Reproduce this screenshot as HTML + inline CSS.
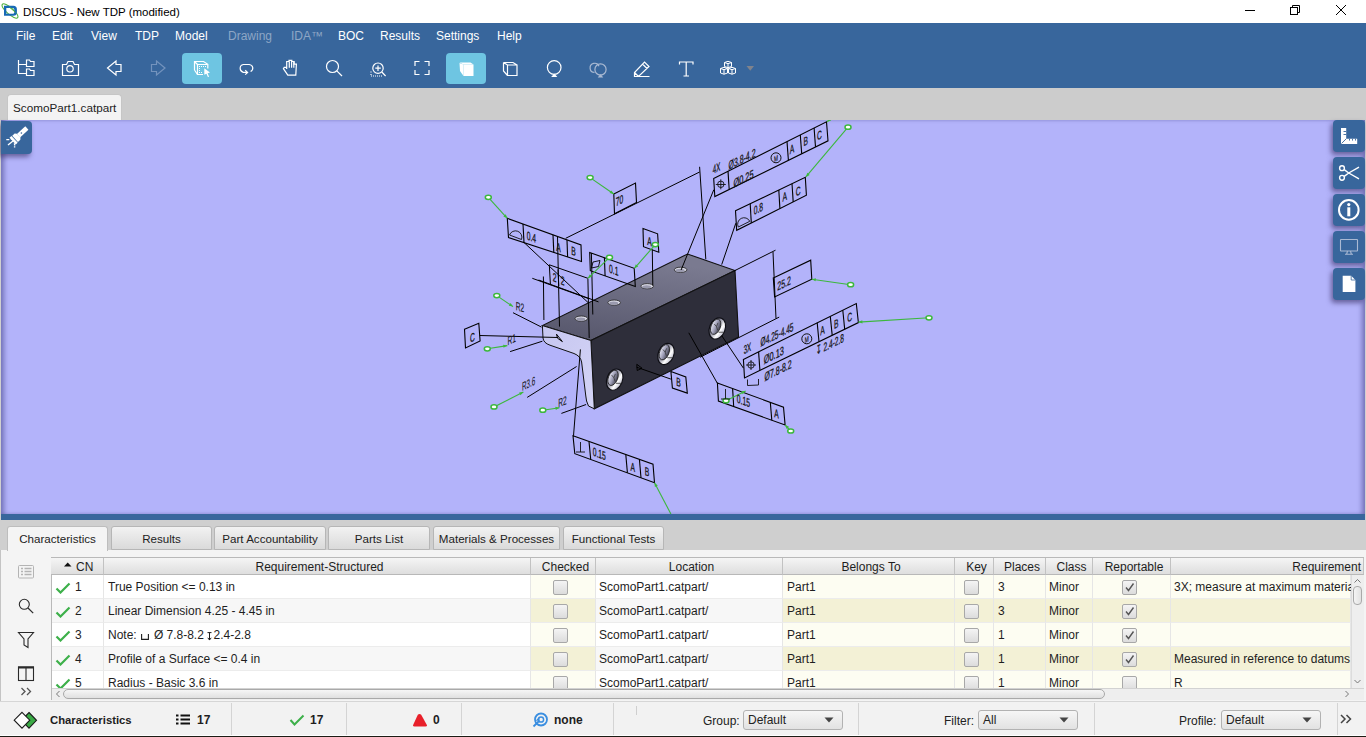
<!DOCTYPE html>
<html><head><meta charset="utf-8">
<style>
*{margin:0;padding:0;box-sizing:border-box}
html,body{width:1366px;height:737px;overflow:hidden;background:#fff;font-family:"Liberation Sans",sans-serif;color:#000}
.a{position:absolute}
#title{left:0;top:0;width:1366px;height:23px;background:#fff}
#menu{left:0;top:23px;width:1366px;height:65px;background:#38669c}
.mi{position:absolute;top:29px;font-size:12px;color:#fff;white-space:nowrap}
.dis{color:#8ea6c6}
.tb{position:absolute;top:53px;width:40px;height:31px;border-radius:4px}
.sel{background:#6ec5e2}
#tabbar{left:0;top:88px;width:1366px;height:32px;background:#cccccc}
#doctab{left:7px;top:94px;width:115px;height:26px;background:#f3f3f3;border:1px solid #c6c6c6;border-bottom:none;border-radius:4px 4px 0 0;font-size:11.7px;padding:6px 0 0 5px;color:#222;line-height:14px}
#vp{left:1px;top:120px;width:1364px;height:394px;background:#b3b3fa;box-shadow:inset 5px 0 5px -2px rgba(60,60,130,.55),inset -5px 0 5px -2px rgba(60,60,130,.55)}
#vpline{left:1px;top:514px;width:1364px;height:6px;background:#38669c}
#bottom{left:0;top:520px;width:1366px;height:182px;background:#e4e4e4}
#status{left:0;top:702px;width:1366px;height:35px;background:#f2f2f2}
.fbtn{position:absolute;width:32px;height:32px;background:#38669c;border-radius:4px;box-shadow:-2px 3px 5px rgba(40,30,80,.55)}
.tc{font-size:12px;color:#1e1e1e;line-height:24px;white-space:nowrap;padding-top:0px}
.th{font-size:12px;color:#1e1e1e;height:17px;line-height:18px;background:linear-gradient(#f5f5f5,#dedede);border-right:1px solid #c2c2c2;border-bottom:1px solid #b8b8b8;white-space:nowrap;overflow:hidden}
.cb{width:15px;height:15px;border:1px solid #a8a8a8;border-radius:2px;background:linear-gradient(#f4f4f4,#dcdcdc)}
</style></head><body>
<div id="title" class="a"></div>
<div id="menu" class="a"></div>

<!-- title bar -->
<svg class="a" style="left:0;top:0" width="22" height="23" viewBox="0 0 22 23">
 <ellipse cx="10" cy="11" rx="10.2" ry="3.3" transform="rotate(41 10 11)" fill="none" stroke="#4caf3c" stroke-width="1"/>
 <path d="M4,5.7H13.3Q16.9,5.7 16.9,9.3V12.2Q16.9,15.8 13.3,15.8H4ZM6.3,7.9V13.7H12.8Q14.3,13.7 14.3,12.2V9.4Q14.3,7.9 12.8,7.9Z" fill="#1769b5" fill-rule="evenodd"/>
 <path d="M9.5,7.2 L15.6,12.5" stroke="#4caf3c" stroke-width="1" fill="none"/>
</svg>
<div class="a" style="left:23px;top:5.5px;font-size:11.5px;color:#000;white-space:nowrap" id="ttl">DISCUS - New TDP (modified)</div>
<svg class="a" style="left:1240px;top:0" width="126" height="23" viewBox="1240 0 126 23">
 <path d="M1245 10.5h10" stroke="#000" stroke-width="1"/>
 <rect x="1290.5" y="7.5" width="7" height="7" fill="none" stroke="#000"/>
 <path d="M1292.5 7.5v-2h7v7h-2" fill="none" stroke="#000"/>
 <path d="M1336 5l10 10M1346 5l-10 10" stroke="#000" stroke-width="1"/>
</svg>
<!-- menu -->
<div class="mi" style="left:16px">File</div>
<div class="mi" style="left:52px">Edit</div>
<div class="mi" style="left:91px">View</div>
<div class="mi" style="left:135px">TDP</div>
<div class="mi" style="left:175px">Model</div>
<div class="mi dis" style="left:228px">Drawing</div>
<div class="mi dis" style="left:291px">IDA&#8482;</div>
<div class="mi" style="left:338px">BOC</div>
<div class="mi" style="left:380px">Results</div>
<div class="mi" style="left:436px">Settings</div>
<div class="mi" style="left:497px">Help</div>
<!-- toolbar -->
<div class="tb sel" style="left:182px"></div>
<div class="tb sel" style="left:446px"></div>
<svg class="a" style="left:0;top:48px" width="780" height="40" viewBox="0 48 780 40" fill="none" stroke="#fff" stroke-width="1.2">
 <!-- tree -->
 <path d="M18.5 60v13.5h7.5M18.5 64.5h7.5"/>
 <path d="M26.5 66.5v-6.5h3l1 1.5h3.5v5z"/>
 <path d="M26.5 75.5v-6.5h3l1 1.5h3.5v5z"/>
 <!-- camera -->
 <path d="M62.5 75.5v-11h4l1.5-3h5l1.5 3h4v11z"/>
 <circle cx="70" cy="68.8" r="3.2"/>
 <!-- back -->
 <path d="M107.5 68l8.5-7v3.5h5v7h-5v3.5z"/>
 <!-- forward disabled -->
 <path d="M165 68l-8.5-7v3.5h-5v7h5v3.5z" stroke="#7393bd"/>
 <!-- select cube -->
 <path d="M194.5 70V61.5h9l4.3 2.8v4.2M194.5 70l3 4.5M194.5 61.5l3 3"/>
 <path d="M207.5 64.5h-10v10h5.5"/>
 <path d="M199 66h1v1h-1zM201 66h1v1h-1zM203 66h1v1h-1zM205 66h1v1h-1zM199 68h1v1h-1zM199 70h1v1h-1zM199 72h1v1h-1zM201 72h1v1h-1z" fill="#fff" stroke="none"/>
 <path d="M204.3 68.3l5.7 4.3-2.4.6 1.5 3.5-1.2.4-1.4-3.3-2.2.9z" fill="#fff" stroke="none"/>
 <!-- lasso -->
 <path d="M250.6,71.5C253.8,69.8 253.6,65.2 249.2,64.5H243.3C239,65.4 239.2,71.2 243.3,72.4H247.2"/>
 <path d="M245.2,70.3L247.6,72.5L245.2,74.6"/>
 <!-- hand -->
 <path d="M287.8 75.2h8l.6-11h-2.3v-2.7h-2.3v-1.2h-2.8v1.2h-2.3v7.4l-.3-1.5h-2.2l-.8 1.3z"/>
 <path d="M289.3 61.5v6.2M291.6 60.8v6.9M293.8 61.5v6.2"/>
 <!-- search -->
 <circle cx="332.5" cy="66.5" r="6"/>
 <path d="M336.8 70.8l5.2 5.2"/>
 <!-- zoom in -->
 <circle cx="378" cy="68.2" r="5.2"/>
 <path d="M378 65.5v5.5M375.3 68.2h5.5M381.8 72l3.8 4"/>
 <path d="M371 71.5v1M371 74v1M371 76h11" stroke-dasharray="1 1"/>
 <!-- fit -->
 <path d="M415 66v-4.5h4.5M424.5 61.5h4.5V66M429 70v4.5h-4.5M419.5 74.5H415V70"/>
 <!-- solid cube (selected) -->
 <path d="M463.5 64.5h10v11.5h-10z" fill="#fff" stroke="none"/>
 <path d="M459.5 63l4 1.5v11.5l-3.5-5z" fill="#fff" stroke="none"/>
 <path d="M459.5 62.5h11l3 2h-10z" fill="#fff" stroke="none"/>
 <!-- wire cube -->
 <path d="M507.5 65h9.5v10.5h-9.5zM503.5 62.5h9.5l4 2.5M503.5 62.5l4 2.5M503.5 62.5v8.5l4 4.5"/>
 <!-- balloon -->
 <circle cx="554.2" cy="67.5" r="6.8"/>
 <path d="M552.5 76.5h3.5l-1.7-2z" fill="#fff"/>
 <!-- two balloons disabled -->
 <g stroke="#a9b9d2">
 <path d="M594.5 72.5a4.6 4.6 0 1 1 4.5 -6.2"/>
 <circle cx="600.5" cy="69.5" r="5.6"/>
 <path d="M599 76.8h3l-1.5-1.8z" fill="#a9b9d2"/>
 </g>
 <!-- pencil -->
 <path d="M634.5 76.5v-4l10-10.5 4.5 4.5-10.5 10h-4zM634.5 72.5l4 4M642.5 64l4.5 4.5M634.5 76.5h15"/>
 <!-- T -->
 <path d="M679.5 64.5v-2.5h13.5v2.5M686.2 62v14M683.5 76h5.5"/>
 <!-- cubes -->
 <g stroke-width="1">
 <path d="M724.5 62.5l3.5-1.2 3.5 1.2v4l-3.5 1.2-3.5-1.2z M724.5 62.5l3.5 1.2 3.5-1.2M728 63.7v4"/>
 <path d="M720.5 68.5l3.5-1.2 3.5 1.2v4.5l-3.5 1.2-3.5-1.2z M720.5 68.5l3.5 1.2 3.5-1.2M724 69.7v4.5"/>
 <path d="M728.5 68.5l3.5-1.2 3.5 1.2v4.5l-3.5 1.2-3.5-1.2z M728.5 68.5l3.5 1.2 3.5-1.2M732 69.7v4.5"/>
 </g>
 <path d="M746.5 66h7.5l-3.75 4.8z" fill="#80838c" stroke="none"/>
</svg>
<div id="tabbar" class="a"></div>
<div id="doctab" class="a">ScomoPart1.catpart</div>
<div id="vp" class="a"></div><!--DRAW--><svg class="a" style="left:0;top:120px" width="1366" height="394" viewBox="0 120 1366 394" font-family="Liberation Sans, sans-serif"><defs>
<linearGradient id="gtop" x1="0" y1="1" x2="0.3" y2="0"><stop offset="0" stop-color="#55556a"/><stop offset="1" stop-color="#7a7a90"/></linearGradient>
<radialGradient id="ghole" cx="0.35" cy="0.35" r="0.7"><stop offset="0" stop-color="#ffffff"/><stop offset="0.5" stop-color="#c8c8d8"/><stop offset="1" stop-color="#5c5c70"/></radialGradient>
<linearGradient id="gface" x1="0" y1="0" x2="1" y2="1"><stop offset="0" stop-color="#c6c6f0"/><stop offset="1" stop-color="#d4d4f6"/></linearGradient>
</defs>
<polygon points="542.4,325.6 590.9,340.5 735.0,270.6 687.5,254.0" fill="url(#gtop)" stroke="#111" stroke-width="1.1"/>
<polygon points="590.9,340.5 735.0,270.6 738.6,337.0 594.3,408.8" fill="#2e2e3a" stroke="#111" stroke-width="1.1"/>
<path d="M542.4,325.6 L590.9,340.5 L594.3,408.8 L588.5,406 Q586,401 585.8,396 L581.6,362 Q580.5,356 574,353.5 L550,345.2 Q543.5,343 543,338 Z" fill="url(#gface)" stroke="#111" stroke-width="1"/>
<ellipse cx="581.3" cy="318.6" rx="6.3" ry="2.6" fill="#d8d8e4" stroke="#222" stroke-width="0.8"/>
<ellipse cx="580.8" cy="319.20000000000005" rx="4.5" ry="1.6" fill="#9a9aae"/>
<ellipse cx="614.2" cy="302.6" rx="6.3" ry="2.6" fill="#d8d8e4" stroke="#222" stroke-width="0.8"/>
<ellipse cx="613.7" cy="303.20000000000005" rx="4.5" ry="1.6" fill="#9a9aae"/>
<ellipse cx="647.2" cy="286.2" rx="6.3" ry="2.6" fill="#d8d8e4" stroke="#222" stroke-width="0.8"/>
<ellipse cx="646.7" cy="286.8" rx="4.5" ry="1.6" fill="#9a9aae"/>
<ellipse cx="680.6" cy="269.8" rx="6.3" ry="2.6" fill="#d8d8e4" stroke="#222" stroke-width="0.8"/>
<ellipse cx="680.1" cy="270.40000000000003" rx="4.5" ry="1.6" fill="#9a9aae"/>
<defs><linearGradient id="gh1" x1="0" y1="0" x2="1" y2="0.3"><stop offset="0" stop-color="#30303c"/><stop offset="0.45" stop-color="#8a8a9c"/><stop offset="0.8" stop-color="#ffffff"/><stop offset="1" stop-color="#d0d0dc"/></linearGradient><linearGradient id="gh2" x1="0" y1="0" x2="1" y2="0"><stop offset="0" stop-color="#e8e8f4"/><stop offset="0.5" stop-color="#9c9cb4"/><stop offset="1" stop-color="#40404e"/></linearGradient></defs>
<g transform="rotate(22 614.7 379.6)">
<ellipse cx="614.7" cy="379.6" rx="7.8" ry="11" fill="url(#gh1)" stroke="#0e0e14" stroke-width="1.1"/>
<ellipse cx="612.5" cy="378.6" rx="4.6" ry="8" fill="url(#gh2)" stroke="#222" stroke-width="0.8"/>
<path d="M610.2,376.6 l3,1.5 M613.2,378.1 v-4 M613.2,378.1 l2.5,3 M617.2,382.6 l5,-2" stroke="#333" stroke-width="0.7" fill="none"/>
</g>
<g transform="rotate(22 666 354)">
<ellipse cx="666" cy="354" rx="7.8" ry="11" fill="url(#gh1)" stroke="#0e0e14" stroke-width="1.1"/>
<ellipse cx="663.8" cy="353" rx="4.6" ry="8" fill="url(#gh2)" stroke="#222" stroke-width="0.8"/>
<path d="M661.5,351 l3,1.5 M664.5,352.5 v-4 M664.5,352.5 l2.5,3 M668.5,357 l5,-2" stroke="#333" stroke-width="0.7" fill="none"/>
</g>
<g transform="rotate(22 717.3 328.5)">
<ellipse cx="717.3" cy="328.5" rx="7.8" ry="11" fill="url(#gh1)" stroke="#0e0e14" stroke-width="1.1"/>
<ellipse cx="715.0999999999999" cy="327.5" rx="4.6" ry="8" fill="url(#gh2)" stroke="#222" stroke-width="0.8"/>
<path d="M712.8,325.5 l3,1.5 M715.8,327.0 v-4 M715.8,327.0 l2.5,3 M719.8,331.5 l5,-2" stroke="#333" stroke-width="0.7" fill="none"/>
</g>
<polygon points="507.3,218.3 581.0,245.0 581.5,261.5 508.5,237.5" fill="none" stroke="#000" stroke-width="1.1"/>
<line x1="523.0" y1="224.0" x2="524.0" y2="242.6" stroke="#000" stroke-width="1.1"/>
<line x1="553.0" y1="234.9" x2="553.8" y2="252.4" stroke="#000" stroke-width="1.1"/>
<line x1="567.0" y1="239.9" x2="567.6" y2="256.9" stroke="#000" stroke-width="1.1"/>
<polygon points="613.8,194.0 635.5,183.0 636.5,202.5 614.5,213.8" fill="none" stroke="#000" stroke-width="1.1"/>
<polygon points="713.7,178.5 826.5,121.8 828.0,140.8 714.8,196.6" fill="none" stroke="#000" stroke-width="1.1"/>
<line x1="728.0" y1="171.3" x2="729.2" y2="189.5" stroke="#000" stroke-width="1.1"/>
<line x1="787.0" y1="141.6" x2="788.4" y2="160.3" stroke="#000" stroke-width="1.1"/>
<line x1="800.3" y1="135.0" x2="801.7" y2="153.7" stroke="#000" stroke-width="1.1"/>
<line x1="814.1" y1="128.0" x2="815.5" y2="146.9" stroke="#000" stroke-width="1.1"/>
<polygon points="735.5,210.8 805.3,177.3 806.4,195.2 736.7,230.3" fill="none" stroke="#000" stroke-width="1.1"/>
<line x1="750.2" y1="203.8" x2="751.3" y2="222.9" stroke="#000" stroke-width="1.1"/>
<line x1="778.8" y1="190.0" x2="779.9" y2="208.5" stroke="#000" stroke-width="1.1"/>
<line x1="792.0" y1="183.7" x2="793.2" y2="201.9" stroke="#000" stroke-width="1.1"/>
<polygon points="589.7,252.5 634.2,268.3 635.3,286.5 590.3,270.7" fill="none" stroke="#000" stroke-width="1.1"/>
<line x1="604.4" y1="257.7" x2="605.1" y2="275.9" stroke="#000" stroke-width="1.1"/>
<polygon points="643.0,228.5 657.6,233.8 658.8,252.3 643.5,246.7" fill="none" stroke="#000" stroke-width="1.1"/>
<polygon points="773.3,277.9 810.7,260.2 811.8,279.2 774.6,296.9" fill="none" stroke="#000" stroke-width="1.1"/>
<polygon points="743.4,359.4 856.3,303.5 858.4,322.6 744.5,377.9" fill="none" stroke="#000" stroke-width="1.1"/>
<line x1="758.6" y1="351.9" x2="759.9" y2="370.4" stroke="#000" stroke-width="1.1"/>
<line x1="817.2" y1="322.8" x2="819.0" y2="341.7" stroke="#000" stroke-width="1.1"/>
<line x1="830.3" y1="316.4" x2="832.2" y2="335.3" stroke="#000" stroke-width="1.1"/>
<line x1="842.8" y1="310.2" x2="844.7" y2="329.2" stroke="#000" stroke-width="1.1"/>
<polygon points="717.4,382.9 783.5,407.2 785.1,425.0 718.4,401.1" fill="none" stroke="#000" stroke-width="1.1"/>
<line x1="732.6" y1="388.5" x2="733.7" y2="406.6" stroke="#000" stroke-width="1.1"/>
<line x1="770.3" y1="402.3" x2="771.8" y2="420.2" stroke="#000" stroke-width="1.1"/>
<polygon points="573.0,435.8 653.0,464.2 654.5,482.7 574.8,453.7" fill="none" stroke="#000" stroke-width="1.1"/>
<line x1="589.0" y1="441.5" x2="590.7" y2="459.5" stroke="#000" stroke-width="1.1"/>
<line x1="625.8" y1="454.5" x2="627.4" y2="472.8" stroke="#000" stroke-width="1.1"/>
<line x1="639.4" y1="459.4" x2="641.0" y2="477.8" stroke="#000" stroke-width="1.1"/>
<polygon points="670.9,371.6 685.8,377.0 687.3,393.1 672.4,388.0" fill="none" stroke="#000" stroke-width="1.1"/>
<polygon points="464.5,329.2 478.8,323.2 480.1,341.0 465.5,348.0" fill="none" stroke="#000" stroke-width="1.1"/>
<line x1="549.3" y1="264.8" x2="587.9" y2="278.3" stroke="#000" stroke-width="1.0"/>
<line x1="549.3" y1="264.8" x2="550.4" y2="284.3" stroke="#000" stroke-width="1.0"/>
<line x1="558.0" y1="269.5" x2="558.8" y2="286.0" stroke="#000" stroke-width="1.0"/>
<line x1="565.7" y1="238.3" x2="699.6" y2="172.0" stroke="#000" stroke-width="1.0"/>
<line x1="699.6" y1="166.8" x2="705.8" y2="259.3" stroke="#000" stroke-width="1.0"/>
<line x1="713.8" y1="189.7" x2="681.1" y2="270.0" stroke="#000" stroke-width="1.0"/>
<line x1="735.8" y1="223.2" x2="721.7" y2="264.6" stroke="#000" stroke-width="1.0"/>
<line x1="734.0" y1="271.0" x2="775.5" y2="250.2" stroke="#000" stroke-width="1.0"/>
<line x1="773.0" y1="252.0" x2="776.0" y2="318.5" stroke="#000" stroke-width="1.0"/>
<line x1="700.0" y1="357.3" x2="779.2" y2="317.1" stroke="#000" stroke-width="1.0"/>
<line x1="721.7" y1="335.6" x2="743.4" y2="368.1" stroke="#000" stroke-width="1.0"/>
<line x1="688.8" y1="332.8" x2="717.4" y2="383.3" stroke="#000" stroke-width="1.0"/>
<line x1="636.6" y1="367.2" x2="670.9" y2="379.1" stroke="#000" stroke-width="1.0"/>
<line x1="523.5" y1="242.0" x2="589.1" y2="303.5" stroke="#000" stroke-width="1.0"/>
<line x1="532.3" y1="278.3" x2="589.1" y2="298.8" stroke="#000" stroke-width="1.0"/>
<line x1="543.4" y1="276.5" x2="543.9" y2="320.0" stroke="#000" stroke-width="1.0"/>
<line x1="557.5" y1="236.7" x2="559.5" y2="326.6" stroke="#000" stroke-width="1.0"/>
<line x1="587.9" y1="278.9" x2="589.2" y2="338.0" stroke="#000" stroke-width="1.0"/>
<line x1="591.4" y1="253.0" x2="592.8" y2="314.5" stroke="#000" stroke-width="1.0"/>
<line x1="652.3" y1="249.6" x2="652.8" y2="285.5" stroke="#000" stroke-width="1.0"/>
<line x1="479.7" y1="335.5" x2="558.0" y2="337.5" stroke="#000" stroke-width="1.0"/>
<line x1="513.0" y1="312.7" x2="541.5" y2="327.1" stroke="#000" stroke-width="1.0"/>
<line x1="510.1" y1="351.6" x2="542.4" y2="341.2" stroke="#000" stroke-width="1.0"/>
<line x1="527.2" y1="397.4" x2="576.6" y2="366.5" stroke="#000" stroke-width="1.0"/>
<line x1="561.4" y1="413.4" x2="586.1" y2="404.5" stroke="#000" stroke-width="1.0"/>
<line x1="580.4" y1="349.4" x2="573.5" y2="435.8" stroke="#000" stroke-width="1.0"/>
<line x1="538.6" y1="280.0" x2="598.5" y2="301.9" stroke="#000" stroke-width="1.0"/>
<polygon points="556.5,334.2 562.4,341.6 557.5,338.2" fill="none" stroke="#000" stroke-width="1"/>
<polygon points="636.8,364.3 637.2,370.5 642.0,368.2" fill="none" stroke="#000" stroke-width="1"/>
<line x1="488.3" y1="197.3" x2="507.3" y2="218.3" stroke="#3cb83c" stroke-width="1.1"/>
<polygon points="507.3,218.3 503.4,216.4 505.8,214.3" fill="#3cb83c"/>
<ellipse cx="488.3" cy="197.3" rx="3" ry="2.1" fill="#ffffff" stroke="#3cb83c" stroke-width="1.5"/>
<line x1="590.1" y1="177.6" x2="613.8" y2="194.0" stroke="#3cb83c" stroke-width="1.1"/>
<polygon points="613.8,194.0 609.6,193.0 611.4,190.4" fill="#3cb83c"/>
<ellipse cx="590.1" cy="177.6" rx="3" ry="2.1" fill="#ffffff" stroke="#3cb83c" stroke-width="1.5"/>
<line x1="848.0" y1="127.2" x2="805.9" y2="176.9" stroke="#3cb83c" stroke-width="1.1"/>
<polygon points="805.9,176.9 807.3,172.8 809.7,174.9" fill="#3cb83c"/>
<ellipse cx="848.0" cy="127.2" rx="3" ry="2.1" fill="#ffffff" stroke="#3cb83c" stroke-width="1.5"/>
<line x1="830.0" y1="119.5" x2="827.0" y2="121.7" stroke="#3cb83c" stroke-width="1.1"/>
<polygon points="827.0,121.7 829.3,118.0 831.2,120.6" fill="#3cb83c"/>
<line x1="609.5" y1="257.4" x2="587.9" y2="278.3" stroke="#3cb83c" stroke-width="1.1"/>
<polygon points="587.9,278.3 589.7,274.4 591.9,276.7" fill="#3cb83c"/>
<ellipse cx="609.5" cy="257.4" rx="3" ry="2.1" fill="#ffffff" stroke="#3cb83c" stroke-width="1.5"/>
<line x1="655.3" y1="244.6" x2="634.4" y2="268.3" stroke="#3cb83c" stroke-width="1.1"/>
<polygon points="634.4,268.3 635.8,264.2 638.2,266.4" fill="#3cb83c"/>
<ellipse cx="655.3" cy="244.6" rx="3" ry="2.1" fill="#ffffff" stroke="#3cb83c" stroke-width="1.5"/>
<line x1="850.6" y1="284.7" x2="811.8" y2="279.2" stroke="#3cb83c" stroke-width="1.1"/>
<polygon points="811.8,279.2 816.0,278.2 815.5,281.3" fill="#3cb83c"/>
<ellipse cx="850.6" cy="284.7" rx="3" ry="2.1" fill="#ffffff" stroke="#3cb83c" stroke-width="1.5"/>
<line x1="929.0" y1="317.8" x2="858.4" y2="322.1" stroke="#3cb83c" stroke-width="1.1"/>
<polygon points="858.4,322.1 862.3,320.3 862.5,323.5" fill="#3cb83c"/>
<ellipse cx="929.0" cy="317.8" rx="3" ry="2.1" fill="#ffffff" stroke="#3cb83c" stroke-width="1.5"/>
<line x1="726.0" y1="400.7" x2="745.6" y2="391.0" stroke="#3cb83c" stroke-width="1.1"/>
<polygon points="745.6,391.0 742.7,394.2 741.3,391.3" fill="#3cb83c"/>
<ellipse cx="726.0" cy="400.7" rx="3" ry="2.1" fill="#ffffff" stroke="#3cb83c" stroke-width="1.5"/>
<line x1="790.7" y1="431.0" x2="785.1" y2="425.0" stroke="#3cb83c" stroke-width="1.1"/>
<polygon points="785.1,425.0 789.0,426.8 786.7,429.0" fill="#3cb83c"/>
<ellipse cx="790.7" cy="431.0" rx="3" ry="2.1" fill="#ffffff" stroke="#3cb83c" stroke-width="1.5"/>
<line x1="670.9" y1="514.0" x2="654.5" y2="482.7" stroke="#3cb83c" stroke-width="1.1"/>
<polygon points="654.5,482.7 657.8,485.5 654.9,487.0" fill="#3cb83c"/>
<line x1="496.8" y1="295.6" x2="513.0" y2="306.6" stroke="#3cb83c" stroke-width="1.1"/>
<polygon points="513.0,306.6 508.8,305.7 510.6,303.0" fill="#3cb83c"/>
<ellipse cx="496.8" cy="295.6" rx="3" ry="2.1" fill="#ffffff" stroke="#3cb83c" stroke-width="1.5"/>
<line x1="487.3" y1="348.8" x2="507.3" y2="345.6" stroke="#3cb83c" stroke-width="1.1"/>
<polygon points="507.3,345.6 503.6,347.8 503.1,344.7" fill="#3cb83c"/>
<ellipse cx="487.3" cy="348.8" rx="3" ry="2.1" fill="#ffffff" stroke="#3cb83c" stroke-width="1.5"/>
<line x1="494.0" y1="406.9" x2="523.4" y2="392.1" stroke="#3cb83c" stroke-width="1.1"/>
<polygon points="523.4,392.1 520.5,395.3 519.1,392.5" fill="#3cb83c"/>
<ellipse cx="494.0" cy="406.9" rx="3" ry="2.1" fill="#ffffff" stroke="#3cb83c" stroke-width="1.5"/>
<line x1="542.8" y1="410.2" x2="559.5" y2="407.7" stroke="#3cb83c" stroke-width="1.1"/>
<polygon points="559.5,407.7 555.8,409.9 555.3,406.7" fill="#3cb83c"/>
<ellipse cx="542.8" cy="410.2" rx="3" ry="2.1" fill="#ffffff" stroke="#3cb83c" stroke-width="1.5"/>
<text transform="matrix(0.56,0.202,0,1,531.4,241.2)" text-anchor="middle" font-size="12" fill="#141414" stroke="#141414" stroke-width="0.3">0.4</text>
<text transform="matrix(0.56,0.202,0,1,558.5,251.6)" text-anchor="middle" font-size="12" fill="#141414" stroke="#141414" stroke-width="0.3">A</text>
<text transform="matrix(0.56,0.202,0,1,573.4,255.2)" text-anchor="middle" font-size="12" fill="#141414" stroke="#141414" stroke-width="0.3">B</text>
<path d="M509.5,235 A6.4,6.4 0 0 1 521.5,239.5 Z" fill="none" stroke="#111" stroke-width="0.9"/>
<text transform="matrix(0.56,-0.280,0,1,619.5,204.6)" text-anchor="middle" font-size="12" fill="#141414" stroke="#141414" stroke-width="0.3">70</text>
<text transform="matrix(0.5,-0.245,0,1,716.5,172.2)" text-anchor="middle" font-size="12" fill="#141414" stroke="#141414" stroke-width="0.3">4X</text>
<text transform="matrix(0.58,-0.284,0,1,742.0,163.2)" text-anchor="middle" font-size="12" fill="#141414" stroke="#141414" stroke-width="0.3">Ø3.8-4.2</text>
<text transform="matrix(0.62,-0.304,0,1,743.5,182.7)" text-anchor="middle" font-size="12" fill="#141414" stroke="#141414" stroke-width="0.3">Ø0.25</text>
<text transform="matrix(0.56,-0.274,0,1,792.0,153.2)" text-anchor="middle" font-size="12" fill="#141414" stroke="#141414" stroke-width="0.3">A</text>
<text transform="matrix(0.56,-0.274,0,1,805.8,145.2)" text-anchor="middle" font-size="12" fill="#141414" stroke="#141414" stroke-width="0.3">B</text>
<text transform="matrix(0.56,-0.274,0,1,819.5,139.2)" text-anchor="middle" font-size="12" fill="#141414" stroke="#141414" stroke-width="0.3">C</text>
<circle cx="776" cy="157.8" r="5" fill="none" stroke="#111" stroke-width="1"/>
<text transform="matrix(0.6,-0.294,0,1,776.0,161.2)" text-anchor="middle" font-size="8" fill="#141414" stroke="#141414" stroke-width="0.2">M</text>
<g stroke="#111" stroke-width="0.9" fill="none"><circle cx="720.8" cy="184.3" r="3.2"/><path d="M715.8,184.5h10M720.8,179.3v10"/></g>
<text transform="matrix(0.56,-0.274,0,1,758.4,212.8)" text-anchor="middle" font-size="12" fill="#141414" stroke="#141414" stroke-width="0.3">0.8</text>
<text transform="matrix(0.56,-0.274,0,1,784.7,200.6)" text-anchor="middle" font-size="12" fill="#141414" stroke="#141414" stroke-width="0.3">A</text>
<text transform="matrix(0.56,-0.274,0,1,798.3,195.2)" text-anchor="middle" font-size="12" fill="#141414" stroke="#141414" stroke-width="0.3">C</text>
<path d="M738.3,227 A6.3,6.3 0 0 1 749.8,221.3 Z" fill="none" stroke="#111" stroke-width="0.9"/>
<text transform="matrix(0.56,0.202,0,1,613.7,274.2)" text-anchor="middle" font-size="12" fill="#141414" stroke="#141414" stroke-width="0.3">0.1</text>
<polygon points="593.0,262.0 600.0,260.5 598.5,266.5 591.5,268.0" fill="none" stroke="#000" stroke-width="0.9"/>
<text transform="matrix(0.56,0.202,0,1,649.4,245.6)" text-anchor="middle" font-size="12" fill="#141414" stroke="#141414" stroke-width="0.3">A</text>
<text transform="matrix(0.56,0.202,0,1,554.5,281.7)" text-anchor="middle" font-size="12" fill="#141414" stroke="#141414" stroke-width="0.3">2</text>
<text transform="matrix(0.56,0.202,0,1,562.7,284.8)" text-anchor="middle" font-size="12" fill="#141414" stroke="#141414" stroke-width="0.3">2</text>
<text transform="matrix(0.58,-0.284,0,1,784.1,287.5)" text-anchor="middle" font-size="12" fill="#141414" stroke="#141414" stroke-width="0.3">25.2</text>
<text transform="matrix(0.5,-0.245,0,1,747.3,352.4)" text-anchor="middle" font-size="12" fill="#141414" stroke="#141414" stroke-width="0.3">3X</text>
<text transform="matrix(0.55,-0.270,0,1,777.0,338.7)" text-anchor="middle" font-size="12" fill="#141414" stroke="#141414" stroke-width="0.3">Ø4.25-4.45</text>
<text transform="matrix(0.62,-0.304,0,1,773.8,359.3)" text-anchor="middle" font-size="12" fill="#141414" stroke="#141414" stroke-width="0.3">Ø0.13</text>
<text transform="matrix(0.56,-0.274,0,1,822.6,334.3)" text-anchor="middle" font-size="12" fill="#141414" stroke="#141414" stroke-width="0.3">A</text>
<text transform="matrix(0.56,-0.274,0,1,836.3,327.8)" text-anchor="middle" font-size="12" fill="#141414" stroke="#141414" stroke-width="0.3">B</text>
<text transform="matrix(0.56,-0.274,0,1,849.7,321.3)" text-anchor="middle" font-size="12" fill="#141414" stroke="#141414" stroke-width="0.3">C</text>
<circle cx="806.8" cy="338.8" r="5" fill="none" stroke="#111" stroke-width="1"/>
<text transform="matrix(0.6,-0.294,0,1,806.8,342.2)" text-anchor="middle" font-size="8" fill="#141414" stroke="#141414" stroke-width="0.2">M</text>
<g stroke="#111" stroke-width="0.9" fill="none"><circle cx="751" cy="365" r="3.2"/><path d="M746,365h10M751,360v10"/></g>
<text transform="matrix(0.58,-0.284,0,1,778.1,374.5)" text-anchor="middle" font-size="12" fill="#141414" stroke="#141414" stroke-width="0.3">Ø7.8-8.2</text>
<path d="M747.5,379.5 v6 l11,-0.5 v-6" fill="none" stroke="#111" stroke-width="0.9"/>
<text transform="matrix(0.55,-0.270,0,1,830.2,348.5)" text-anchor="middle" font-size="12" fill="#141414" stroke="#141414" stroke-width="0.3">↧ 2.4-2.8</text>
<text transform="matrix(0.56,0.202,0,1,743.4,404.9)" text-anchor="middle" font-size="12" fill="#141414" stroke="#141414" stroke-width="0.3">0.15</text>
<text transform="matrix(0.56,0.202,0,1,776.4,417.9)" text-anchor="middle" font-size="12" fill="#141414" stroke="#141414" stroke-width="0.3">A</text>
<path d="M721,399h9M725.5,399v-10" stroke="#111" stroke-width="0.9"/>
<text transform="matrix(0.56,0.202,0,1,599.3,457.9)" text-anchor="middle" font-size="12" fill="#141414" stroke="#141414" stroke-width="0.3">0.15</text>
<text transform="matrix(0.56,0.202,0,1,632.7,471.4)" text-anchor="middle" font-size="12" fill="#141414" stroke="#141414" stroke-width="0.3">A</text>
<text transform="matrix(0.56,0.202,0,1,647.0,475.8)" text-anchor="middle" font-size="12" fill="#141414" stroke="#141414" stroke-width="0.3">B</text>
<path d="M576,452h9M580.5,452v-10" stroke="#111" stroke-width="0.9"/>
<text transform="matrix(0.56,0.202,0,1,678.4,386.3)" text-anchor="middle" font-size="12" fill="#141414" stroke="#141414" stroke-width="0.3">B</text>
<text transform="matrix(0.56,-0.274,0,1,472.4,341.5)" text-anchor="middle" font-size="12" fill="#141414" stroke="#141414" stroke-width="0.3">C</text>
<text transform="matrix(0.55,0.165,0,1,520.0,311.2)" text-anchor="middle" font-size="12" fill="#141414" stroke="#141414" stroke-width="0.1">R2</text>
<text transform="matrix(0.55,-0.248,0,1,511.6,343.5)" text-anchor="middle" font-size="12" fill="#141414" stroke="#141414" stroke-width="0.1">R1</text>
<text transform="matrix(0.52,-0.260,0,1,528.7,387.8)" text-anchor="middle" font-size="12" fill="#141414" stroke="#141414" stroke-width="0.1">R3.6</text>
<text transform="matrix(0.55,-0.220,0,1,562.4,405.8)" text-anchor="middle" font-size="12" fill="#141414" stroke="#141414" stroke-width="0.1">R2</text></svg><!--/DRAW-->

<div class="a" style="left:0;top:120px;width:1px;height:582px;background:#d0d0d0"></div>
<div class="a" style="left:1365px;top:120px;width:1px;height:582px;background:#d0d0d0"></div>
<div class="fbtn" style="left:1px;top:121px;width:31px;height:33px;border-radius:0 4px 4px 0"></div>
<div class="fbtn" style="left:1333px;top:120px"></div>
<div class="fbtn" style="left:1333px;top:157px"></div>
<div class="fbtn" style="left:1333px;top:194px"></div>
<div class="fbtn" style="left:1333px;top:231px"></div>
<div class="fbtn" style="left:1333px;top:268px"></div>
<svg class="a" style="left:0;top:120px" width="40" height="40" viewBox="0 120 40 40">
 <g transform="translate(15.3 138.6) rotate(-42.6)" fill="#fff">
  <path d="M-3.6,-4.6h2.6v9.2h-2.6z"/>
  <path d="M-0.3,-4.2h3.3l1.5,1.6v5.2l-1.5,1.6h-3.3z"/>
  <path d="M4.3,-2.3h11.4v4.6h-11.4z"/>
  <circle cx="8.3" cy="0" r="0.8" fill="#38669c"/>
 </g>
 <path d="M6.3 139.6h3M8 145l5-4M14.5 143.2l.2 2.3M14.6 146.3v1.1M11.3 138.9l.4.6" stroke="#fff" stroke-width="1.4" fill="none"/>
</svg>
<svg class="a" style="left:1333px;top:120px" width="33" height="185" viewBox="1333 120 33 185">
 <!-- ruler -->
 <path d="M1341 128h5.2v10.8h11v5.2H1341z" fill="#fff"/>
 <path d="M1343.5 131.5h2.7M1343.5 134.5h2.7M1349.5 138.8v1.8M1352.5 138.8v1.8M1355.5 138.8v1.8M1341.5 143.5l4.7-4.7" stroke="#38669c" stroke-width="0.9" fill="none"/>
 <!-- scissors -->
 <g fill="none" stroke="#fff" stroke-width="1.4">
  <circle cx="1342" cy="168.2" r="2.4"/>
  <circle cx="1342" cy="177.8" r="2.4"/>
  <path d="M1344.2 169.6l4.5 3.4 10.3-5.8M1344.2 176.4l4.5-3.4 10.3 5.8"/>
 </g>
 <!-- info -->
 <circle cx="1348.8" cy="209.9" r="9.8" fill="none" stroke="#fff" stroke-width="2"/>
 <circle cx="1348.8" cy="204.6" r="1.6" fill="#fff"/>
 <rect x="1347.3" y="207.3" width="3" height="9" fill="#fff"/>
 <!-- monitor -->
 <g fill="none" stroke="#a9b9d3" stroke-width="1.1">
  <rect x="1340.5" y="239.5" width="17" height="11.5" rx="0.5"/>
  <path d="M1347.5 251l-.8 3M1350.5 251l.8 3M1345 254.3h8"/>
 </g>
 <!-- page -->
 <path d="M1342.7 275.8h8.5l4.2 4.2v12.1h-12.7z" fill="#fff"/>
 <path d="M1351.2 275.8v4.2h4.2" fill="none" stroke="#38669c" stroke-width="0.8"/>
</svg>
<div id="vpline" class="a"></div>
<!--BOT--><div class="a" style="left:0;top:520px;width:1366px;height:31px;background:#cfcfcf"></div>
<div class="a" style="left:0;top:550px;width:1366px;height:152px;background:#f4f4f4;border-left:1px solid #c4c4c4"></div>
<div class="a" style="left:7px;top:526px;width:101px;height:25px;background:#f4f4f4;border:1px solid #bdbdbd;border-bottom:none;border-radius:3px 3px 0 0;font-size:11.6px;color:#222;text-align:center;line-height:23px">Characteristics</div>
<div class="a" style="left:111px;top:526px;width:101px;height:24px;background:linear-gradient(#f2f2f2,#dadada);border:1px solid #b6b6b6;border-radius:3px 3px 0 0;font-size:11.6px;color:#222;text-align:center;line-height:23px">Results</div>
<div class="a" style="left:214px;top:526px;width:112px;height:24px;background:linear-gradient(#f2f2f2,#dadada);border:1px solid #b6b6b6;border-radius:3px 3px 0 0;font-size:11.6px;color:#222;text-align:center;line-height:23px">Part Accountability</div>
<div class="a" style="left:328px;top:526px;width:102px;height:24px;background:linear-gradient(#f2f2f2,#dadada);border:1px solid #b6b6b6;border-radius:3px 3px 0 0;font-size:11.6px;color:#222;text-align:center;line-height:23px">Parts List</div>
<div class="a" style="left:433px;top:526px;width:127px;height:24px;background:linear-gradient(#f2f2f2,#dadada);border:1px solid #b6b6b6;border-radius:3px 3px 0 0;font-size:11.6px;color:#222;text-align:center;line-height:23px">Materials &amp; Processes</div>
<div class="a" style="left:563px;top:526px;width:101px;height:24px;background:linear-gradient(#f2f2f2,#dadada);border:1px solid #b6b6b6;border-radius:3px 3px 0 0;font-size:11.6px;color:#222;text-align:center;line-height:23px">Functional Tests</div>
<div class="a" style="left:51px;top:557px;width:1313px;height:143px;background:#fff;border:1px solid #b9b9b9"></div>
<div class="a" style="left:52px;top:575px;width:1299px;height:113px;overflow:hidden">
<div class="a" style="left:-1px;top:0px;width:53px;height:24px;background:#ffffff;border-right:1px solid #e6e6e6;border-bottom:1px solid #ececec"></div>
<div class="a" style="left:52px;top:0px;width:427px;height:24px;background:#ffffff;border-right:1px solid #e6e6e6;border-bottom:1px solid #ececec"></div>
<div class="a" style="left:479px;top:0px;width:65px;height:24px;background:#fdfdf2;border-right:1px solid #e6e6e6;border-bottom:1px solid #ececec"></div>
<div class="a" style="left:544px;top:0px;width:187px;height:24px;background:#ffffff;border-right:1px solid #e6e6e6;border-bottom:1px solid #ececec"></div>
<div class="a" style="left:731px;top:0px;width:172px;height:24px;background:#fdfdf2;border-right:1px solid #e6e6e6;border-bottom:1px solid #ececec"></div>
<div class="a" style="left:903px;top:0px;width:39px;height:24px;background:#fdfdf2;border-right:1px solid #e6e6e6;border-bottom:1px solid #ececec"></div>
<div class="a" style="left:942px;top:0px;width:52px;height:24px;background:#fdfdf2;border-right:1px solid #e6e6e6;border-bottom:1px solid #ececec"></div>
<div class="a" style="left:994px;top:0px;width:47px;height:24px;background:#fdfdf2;border-right:1px solid #e6e6e6;border-bottom:1px solid #ececec"></div>
<div class="a" style="left:1041px;top:0px;width:78px;height:24px;background:#fdfdf2;border-right:1px solid #e6e6e6;border-bottom:1px solid #ececec"></div>
<div class="a" style="left:1119px;top:0px;width:180px;height:24px;background:#fdfdf2;border-right:1px solid #e6e6e6;border-bottom:1px solid #ececec"></div>
<svg class="a" style="left:3px;top:7px" width="16" height="12" viewBox="0 0 16 12"><path d="M1.5 6.5l4 4L14.5 1.5" fill="none" stroke="#3db04a" stroke-width="2.2"/></svg>
<div class="a tc" style="left:23px;top:0px;">1</div>
<div class="a tc" style="left:56px;top:0px;">True Position &lt;= 0.13 in</div>
<div class="a tc" style="left:547px;top:0px;">ScomoPart1.catpart/</div>
<div class="a tc" style="left:735px;top:0px;">Part1</div>
<div class="a tc" style="left:946px;top:0px;">3</div>
<div class="a tc" style="left:997px;top:0px;">Minor</div>
<div class="a tc" style="left:1122px;top:0px;">3X; measure at maximum materia</div>
<div class="a cb" style="left:501px;top:5px"></div>
<div class="a cb" style="left:912px;top:5px"></div>
<div class="a cb" style="left:1070px;top:5px"><svg width="13" height="13" viewBox="0 0 13 13" style="position:absolute;left:0;top:0"><path d="M3 6.5l2.5 3 5-7" fill="none" stroke="#555" stroke-width="1.4"/></svg></div>
<div class="a" style="left:-1px;top:24px;width:53px;height:24px;background:#f7f7f7;border-right:1px solid #e6e6e6;border-bottom:1px solid #ececec"></div>
<div class="a" style="left:52px;top:24px;width:427px;height:24px;background:#f7f7f7;border-right:1px solid #e6e6e6;border-bottom:1px solid #ececec"></div>
<div class="a" style="left:479px;top:24px;width:65px;height:24px;background:#f3f1d6;border-right:1px solid #e6e6e6;border-bottom:1px solid #ececec"></div>
<div class="a" style="left:544px;top:24px;width:187px;height:24px;background:#f7f7f7;border-right:1px solid #e6e6e6;border-bottom:1px solid #ececec"></div>
<div class="a" style="left:731px;top:24px;width:172px;height:24px;background:#f3f1d6;border-right:1px solid #e6e6e6;border-bottom:1px solid #ececec"></div>
<div class="a" style="left:903px;top:24px;width:39px;height:24px;background:#f3f1d6;border-right:1px solid #e6e6e6;border-bottom:1px solid #ececec"></div>
<div class="a" style="left:942px;top:24px;width:52px;height:24px;background:#f3f1d6;border-right:1px solid #e6e6e6;border-bottom:1px solid #ececec"></div>
<div class="a" style="left:994px;top:24px;width:47px;height:24px;background:#f3f1d6;border-right:1px solid #e6e6e6;border-bottom:1px solid #ececec"></div>
<div class="a" style="left:1041px;top:24px;width:78px;height:24px;background:#f3f1d6;border-right:1px solid #e6e6e6;border-bottom:1px solid #ececec"></div>
<div class="a" style="left:1119px;top:24px;width:180px;height:24px;background:#f3f1d6;border-right:1px solid #e6e6e6;border-bottom:1px solid #ececec"></div>
<svg class="a" style="left:3px;top:31px" width="16" height="12" viewBox="0 0 16 12"><path d="M1.5 6.5l4 4L14.5 1.5" fill="none" stroke="#3db04a" stroke-width="2.2"/></svg>
<div class="a tc" style="left:23px;top:24px;">2</div>
<div class="a tc" style="left:56px;top:24px;">Linear Dimension 4.25 - 4.45 in</div>
<div class="a tc" style="left:547px;top:24px;">ScomoPart1.catpart/</div>
<div class="a tc" style="left:735px;top:24px;">Part1</div>
<div class="a tc" style="left:946px;top:24px;">3</div>
<div class="a tc" style="left:997px;top:24px;">Minor</div>
<div class="a cb" style="left:501px;top:29px"></div>
<div class="a cb" style="left:912px;top:29px"></div>
<div class="a cb" style="left:1070px;top:29px"><svg width="13" height="13" viewBox="0 0 13 13" style="position:absolute;left:0;top:0"><path d="M3 6.5l2.5 3 5-7" fill="none" stroke="#555" stroke-width="1.4"/></svg></div>
<div class="a" style="left:-1px;top:48px;width:53px;height:24px;background:#ffffff;border-right:1px solid #e6e6e6;border-bottom:1px solid #ececec"></div>
<div class="a" style="left:52px;top:48px;width:427px;height:24px;background:#ffffff;border-right:1px solid #e6e6e6;border-bottom:1px solid #ececec"></div>
<div class="a" style="left:479px;top:48px;width:65px;height:24px;background:#fdfdf2;border-right:1px solid #e6e6e6;border-bottom:1px solid #ececec"></div>
<div class="a" style="left:544px;top:48px;width:187px;height:24px;background:#ffffff;border-right:1px solid #e6e6e6;border-bottom:1px solid #ececec"></div>
<div class="a" style="left:731px;top:48px;width:172px;height:24px;background:#fdfdf2;border-right:1px solid #e6e6e6;border-bottom:1px solid #ececec"></div>
<div class="a" style="left:903px;top:48px;width:39px;height:24px;background:#fdfdf2;border-right:1px solid #e6e6e6;border-bottom:1px solid #ececec"></div>
<div class="a" style="left:942px;top:48px;width:52px;height:24px;background:#fdfdf2;border-right:1px solid #e6e6e6;border-bottom:1px solid #ececec"></div>
<div class="a" style="left:994px;top:48px;width:47px;height:24px;background:#fdfdf2;border-right:1px solid #e6e6e6;border-bottom:1px solid #ececec"></div>
<div class="a" style="left:1041px;top:48px;width:78px;height:24px;background:#fdfdf2;border-right:1px solid #e6e6e6;border-bottom:1px solid #ececec"></div>
<div class="a" style="left:1119px;top:48px;width:180px;height:24px;background:#fdfdf2;border-right:1px solid #e6e6e6;border-bottom:1px solid #ececec"></div>
<svg class="a" style="left:3px;top:55px" width="16" height="12" viewBox="0 0 16 12"><path d="M1.5 6.5l4 4L14.5 1.5" fill="none" stroke="#3db04a" stroke-width="2.2"/></svg>
<div class="a tc" style="left:23px;top:48px;">3</div>
<div class="a tc" style="left:56px;top:48px;">Note:<svg style="position:absolute;left:33px;top:11px" width="8" height="6" viewBox="0 0 8 6"><path d="M0.6 0v5.4h6.8V0" fill="none" stroke="#1e1e1e" stroke-width="1.1"/></svg><span style="position:absolute;left:46px">&#216;</span><span style="position:absolute;left:58.5px">7.8-8.2</span><svg style="position:absolute;left:98.5px;top:9px" width="5" height="9" viewBox="0 0 5 9"><path d="M0.5 0.6h4M2.5 0.6v7.5M0.8 5.8l1.7 2.2 1.7-2.2" fill="none" stroke="#1e1e1e" stroke-width="1"/></svg><span style="position:absolute;left:105.5px">2.4-2.8</span></div>
<div class="a tc" style="left:547px;top:48px;">ScomoPart1.catpart/</div>
<div class="a tc" style="left:735px;top:48px;">Part1</div>
<div class="a tc" style="left:946px;top:48px;">1</div>
<div class="a tc" style="left:997px;top:48px;">Minor</div>
<div class="a cb" style="left:501px;top:53px"></div>
<div class="a cb" style="left:912px;top:53px"></div>
<div class="a cb" style="left:1070px;top:53px"><svg width="13" height="13" viewBox="0 0 13 13" style="position:absolute;left:0;top:0"><path d="M3 6.5l2.5 3 5-7" fill="none" stroke="#555" stroke-width="1.4"/></svg></div>
<div class="a" style="left:-1px;top:72px;width:53px;height:24px;background:#f7f7f7;border-right:1px solid #e6e6e6;border-bottom:1px solid #ececec"></div>
<div class="a" style="left:52px;top:72px;width:427px;height:24px;background:#f7f7f7;border-right:1px solid #e6e6e6;border-bottom:1px solid #ececec"></div>
<div class="a" style="left:479px;top:72px;width:65px;height:24px;background:#f3f1d6;border-right:1px solid #e6e6e6;border-bottom:1px solid #ececec"></div>
<div class="a" style="left:544px;top:72px;width:187px;height:24px;background:#f7f7f7;border-right:1px solid #e6e6e6;border-bottom:1px solid #ececec"></div>
<div class="a" style="left:731px;top:72px;width:172px;height:24px;background:#f3f1d6;border-right:1px solid #e6e6e6;border-bottom:1px solid #ececec"></div>
<div class="a" style="left:903px;top:72px;width:39px;height:24px;background:#f3f1d6;border-right:1px solid #e6e6e6;border-bottom:1px solid #ececec"></div>
<div class="a" style="left:942px;top:72px;width:52px;height:24px;background:#f3f1d6;border-right:1px solid #e6e6e6;border-bottom:1px solid #ececec"></div>
<div class="a" style="left:994px;top:72px;width:47px;height:24px;background:#f3f1d6;border-right:1px solid #e6e6e6;border-bottom:1px solid #ececec"></div>
<div class="a" style="left:1041px;top:72px;width:78px;height:24px;background:#f3f1d6;border-right:1px solid #e6e6e6;border-bottom:1px solid #ececec"></div>
<div class="a" style="left:1119px;top:72px;width:180px;height:24px;background:#f3f1d6;border-right:1px solid #e6e6e6;border-bottom:1px solid #ececec"></div>
<svg class="a" style="left:3px;top:79px" width="16" height="12" viewBox="0 0 16 12"><path d="M1.5 6.5l4 4L14.5 1.5" fill="none" stroke="#3db04a" stroke-width="2.2"/></svg>
<div class="a tc" style="left:23px;top:72px;">4</div>
<div class="a tc" style="left:56px;top:72px;">Profile of a Surface &lt;= 0.4 in</div>
<div class="a tc" style="left:547px;top:72px;">ScomoPart1.catpart/</div>
<div class="a tc" style="left:735px;top:72px;">Part1</div>
<div class="a tc" style="left:946px;top:72px;">1</div>
<div class="a tc" style="left:997px;top:72px;">Minor</div>
<div class="a tc" style="left:1122px;top:72px;">Measured in reference to datums</div>
<div class="a cb" style="left:501px;top:77px"></div>
<div class="a cb" style="left:912px;top:77px"></div>
<div class="a cb" style="left:1070px;top:77px"><svg width="13" height="13" viewBox="0 0 13 13" style="position:absolute;left:0;top:0"><path d="M3 6.5l2.5 3 5-7" fill="none" stroke="#555" stroke-width="1.4"/></svg></div>
<div class="a" style="left:-1px;top:96px;width:53px;height:24px;background:#ffffff;border-right:1px solid #e6e6e6;border-bottom:1px solid #ececec"></div>
<div class="a" style="left:52px;top:96px;width:427px;height:24px;background:#ffffff;border-right:1px solid #e6e6e6;border-bottom:1px solid #ececec"></div>
<div class="a" style="left:479px;top:96px;width:65px;height:24px;background:#fdfdf2;border-right:1px solid #e6e6e6;border-bottom:1px solid #ececec"></div>
<div class="a" style="left:544px;top:96px;width:187px;height:24px;background:#ffffff;border-right:1px solid #e6e6e6;border-bottom:1px solid #ececec"></div>
<div class="a" style="left:731px;top:96px;width:172px;height:24px;background:#fdfdf2;border-right:1px solid #e6e6e6;border-bottom:1px solid #ececec"></div>
<div class="a" style="left:903px;top:96px;width:39px;height:24px;background:#fdfdf2;border-right:1px solid #e6e6e6;border-bottom:1px solid #ececec"></div>
<div class="a" style="left:942px;top:96px;width:52px;height:24px;background:#fdfdf2;border-right:1px solid #e6e6e6;border-bottom:1px solid #ececec"></div>
<div class="a" style="left:994px;top:96px;width:47px;height:24px;background:#fdfdf2;border-right:1px solid #e6e6e6;border-bottom:1px solid #ececec"></div>
<div class="a" style="left:1041px;top:96px;width:78px;height:24px;background:#fdfdf2;border-right:1px solid #e6e6e6;border-bottom:1px solid #ececec"></div>
<div class="a" style="left:1119px;top:96px;width:180px;height:24px;background:#fdfdf2;border-right:1px solid #e6e6e6;border-bottom:1px solid #ececec"></div>
<svg class="a" style="left:3px;top:103px" width="16" height="12" viewBox="0 0 16 12"><path d="M1.5 6.5l4 4L14.5 1.5" fill="none" stroke="#3db04a" stroke-width="2.2"/></svg>
<div class="a tc" style="left:23px;top:96px;">5</div>
<div class="a tc" style="left:56px;top:96px;">Radius - Basic 3.6 in</div>
<div class="a tc" style="left:547px;top:96px;">ScomoPart1.catpart/</div>
<div class="a tc" style="left:735px;top:96px;">Part1</div>
<div class="a tc" style="left:946px;top:96px;">1</div>
<div class="a tc" style="left:997px;top:96px;">Minor</div>
<div class="a tc" style="left:1122px;top:96px;">R</div>
<div class="a cb" style="left:501px;top:101px"></div>
<div class="a cb" style="left:912px;top:101px"></div>
<div class="a cb" style="left:1070px;top:101px"></div>
</div>
<div class="a th" style="left:51px;top:558px;width:53px;padding-left:25px">CN</div>
<div class="a th" style="left:104px;top:558px;width:427px;text-align:center;padding-left:5px;padding-right:0px">Requirement-Structured</div>
<div class="a th" style="left:531px;top:558px;width:65px;text-align:center;padding-left:5px;padding-right:0px">Checked</div>
<div class="a th" style="left:596px;top:558px;width:187px;text-align:center;padding-left:5px;padding-right:0px">Location</div>
<div class="a th" style="left:783px;top:558px;width:172px;text-align:center;padding-left:5px;padding-right:0px">Belongs To</div>
<div class="a th" style="left:955px;top:558px;width:39px;text-align:center;padding-left:5px;padding-right:0px">Key</div>
<div class="a th" style="left:994px;top:558px;width:52px;text-align:center;padding-left:5px;padding-right:0px">Places</div>
<div class="a th" style="left:1046px;top:558px;width:47px;text-align:center;padding-left:5px;padding-right:0px">Class</div>
<div class="a th" style="left:1093px;top:558px;width:78px;text-align:center;padding-left:5px;padding-right:0px">Reportable</div>
<div class="a th" style="left:1171px;top:558px;width:193px;text-align:right;padding-left:0px;padding-right:2px">Requirement</div>
<svg class="a" style="left:63px;top:561px" width="10" height="7" viewBox="0 0 10 7"><path d="M1 5.5L4.7 1.5 8.5 5.5z" fill="#111"/></svg>
<div class="a" style="left:1351px;top:575px;width:13px;height:113px;background:#eeeeee;border-left:1px solid #dcdcdc"></div>
<div class="a" style="left:1353px;top:586px;width:9px;height:19px;background:linear-gradient(90deg,#f4f4f4,#e2e2e2);border:1px solid #a9a9a9;border-radius:4px"></div>
<svg class="a" style="left:1351px;top:575px" width="13" height="113" viewBox="0 0 13 113"><path d="M3.5 7.5l3-3 3 3M3.5 105l3 3 3-3" fill="none" stroke="#777" stroke-width="1"/></svg>
<div class="a" style="left:52px;top:688px;width:1312px;height:12px;background:#eeeeee;border-top:1px solid #d2d2d2"></div>
<div class="a" style="left:63px;top:689px;width:1042px;height:10px;background:linear-gradient(#f6f6f6,#e0e0e0);border:1px solid #a9a9a9;border-radius:5px"></div>
<svg class="a" style="left:52px;top:688px" width="1312" height="12" viewBox="0 0 1312 12"><path d="M7.5 3l-3 3 3 3M1293.5 3l3 3-3 3" fill="none" stroke="#777" stroke-width="1"/></svg>
<svg class="a" style="left:0;top:560px" width="51" height="140" viewBox="0 560 51 140">
 <rect x="18.5" y="565.5" width="15" height="12.5" rx="1" fill="none" stroke="#b4b4b4"/>
 <path d="M21 568.5h2M24.5 568.5h7M21 571.5h2M24.5 571.5h7M21 574.5h2M24.5 574.5h7" stroke="#b4b4b4" stroke-width="1.4"/>
 <circle cx="24.3" cy="604.3" r="5" fill="none" stroke="#2a2a2a" stroke-width="1.1"/>
 <path d="M28 608l5.2 5.2" stroke="#2a2a2a" stroke-width="1.2"/>
 <path d="M18.5 632.5h15l-5.5 6.5v8.5l-4-2.5v-6z" fill="none" stroke="#2a2a2a" stroke-width="1.1"/>
 <rect x="18.5" y="667" width="15" height="13.5" fill="none" stroke="#2a2a2a" stroke-width="1.1"/>
 <path d="M18 667.5h16" stroke="#2a2a2a" stroke-width="2"/>
 <path d="M26 667v13.5" stroke="#2a2a2a" stroke-width="1.1"/>
 <path d="M21.5 688l3.5 3.5-3.5 3.5M27 688l3.5 3.5-3.5 3.5" fill="none" stroke="#555" stroke-width="1.3"/>
</svg><!--/BOT-->
<!--STA--><div class="a" style="left:0;top:701px;width:1366px;height:36px;background:#f2f2f2;border-top:1px solid #d6d6d6"></div>
<div class="a" style="left:0;top:735px;width:1366px;height:1px;background:#ffffff"></div>
<div class="a" style="left:0;top:736px;width:1366px;height:1px;background:#1c1c14"></div>
<div class="a" style="left:231px;top:703px;width:1px;height:32px;background:#d4d4d4"></div>
<div class="a" style="left:346px;top:703px;width:1px;height:32px;background:#d4d4d4"></div>
<div class="a" style="left:461px;top:703px;width:1px;height:32px;background:#d4d4d4"></div>
<div class="a" style="left:613px;top:703px;width:1px;height:32px;background:#d4d4d4"></div>
<div class="a" style="left:858px;top:703px;width:1px;height:32px;background:#d4d4d4"></div>
<div class="a" style="left:1094px;top:703px;width:1px;height:32px;background:#d4d4d4"></div>
<div class="a" style="left:1337px;top:703px;width:1px;height:32px;background:#d4d4d4"></div>
<div class="a" style="left:636px;top:706px;width:1px;height:9px;background:#cfcfcf"></div>
<svg class="a" style="left:10px;top:708px" width="30" height="24" viewBox="10 708 30 24">
 <path d="M29 712.5l7.5 7.8-7.5 7.8-7.5-7.8z" fill="#3aaa45" stroke="#1a1a1a" stroke-width="1.1"/>
 <path d="M22 712.3l7.8 7.9-7.8 8-7.8-8z" fill="#fff" stroke="#1a1a1a" stroke-width="1.1"/>
</svg>
<div class="a" style="left:50px;top:713px;font-size:12px;font-weight:bold;color:#1e1e1e;white-space:nowrap;line-height:14px;font-size:11.3px">Characteristics</div>
<svg class="a" style="left:175px;top:714px" width="16" height="12" viewBox="0 0 16 12">
 <path d="M1 1.5h2.5M5.5 1.5H15M1 5.5h2.5M5.5 5.5H15M1 9.5h2.5M5.5 9.5H15" stroke="#111" stroke-width="2"/>
</svg>
<div class="a" style="left:197px;top:713px;font-size:12px;font-weight:bold;color:#1e1e1e;white-space:nowrap;line-height:14px">17</div>
<svg class="a" style="left:289px;top:714px" width="16" height="12" viewBox="0 0 16 12"><path d="M1.5 6l4 4.5L14.5 1.5" fill="none" stroke="#3db04a" stroke-width="2"/></svg>
<div class="a" style="left:310px;top:713px;font-size:12px;font-weight:bold;color:#1e1e1e;white-space:nowrap;line-height:14px">17</div>
<svg class="a" style="left:412px;top:713px" width="16" height="14" viewBox="0 0 16 14"><path d="M5.8 1.8Q7.5 0 9.2 1.8L15 12.2Q15 13.5 13.5 13.5H2.5Q1 13.5 1 12.2z" fill="#e8202a"/></svg>
<div class="a" style="left:433px;top:713px;font-size:12px;font-weight:bold;color:#1e1e1e;white-space:nowrap;line-height:14px">0</div>
<svg class="a" style="left:532px;top:712px" width="17" height="16" viewBox="0 0 17 16">
 <circle cx="9" cy="7.5" r="6" fill="none" stroke="#3a8ee0" stroke-width="1.8"/>
 <circle cx="9" cy="7.5" r="2.6" fill="none" stroke="#3a8ee0" stroke-width="1.5"/>
 <path d="M1.5 14.5l6-6" stroke="#3a8ee0" stroke-width="1.8"/>
 <path d="M7.5 8.5l-4 .3 3.8-3.8z" fill="#3a8ee0"/>
</svg>
<div class="a" style="left:554px;top:713px;font-size:12px;font-weight:bold;color:#1e1e1e;white-space:nowrap;line-height:14px">none</div>
<div class="a" style="left:703px;top:714px;font-size:12px;color:#222;white-space:nowrap;line-height:14px">Group:</div>
<div class="a" style="left:944px;top:714px;font-size:12px;color:#222;white-space:nowrap;line-height:14px">Filter:</div>
<div class="a" style="left:1179px;top:714px;font-size:12px;color:#222;white-space:nowrap;line-height:14px">Profile:</div>
<div class="a" style="left:743px;top:710px;width:100px;height:20px;background:linear-gradient(#f6f6f6,#e2e2e2);border:1px solid #b2b2b2;border-radius:3px;font-size:12px;color:#222;white-space:nowrap;line-height:14px;padding:2px 0 0 4px">Default</div>
<svg class="a" style="left:824px;top:717px" width="10" height="6" viewBox="0 0 10 6"><path d="M0.5 0.5h9L5 5.5z" fill="#444"/></svg>
<div class="a" style="left:978px;top:710px;width:100px;height:20px;background:linear-gradient(#f6f6f6,#e2e2e2);border:1px solid #b2b2b2;border-radius:3px;font-size:12px;color:#222;white-space:nowrap;line-height:14px;padding:2px 0 0 4px">All</div>
<svg class="a" style="left:1059px;top:717px" width="10" height="6" viewBox="0 0 10 6"><path d="M0.5 0.5h9L5 5.5z" fill="#444"/></svg>
<div class="a" style="left:1221px;top:710px;width:100px;height:20px;background:linear-gradient(#f6f6f6,#e2e2e2);border:1px solid #b2b2b2;border-radius:3px;font-size:12px;color:#222;white-space:nowrap;line-height:14px;padding:2px 0 0 4px">Default</div>
<svg class="a" style="left:1302px;top:717px" width="10" height="6" viewBox="0 0 10 6"><path d="M0.5 0.5h9L5 5.5z" fill="#444"/></svg>
<svg class="a" style="left:1338px;top:712px" width="16" height="14" viewBox="0 0 16 14"><path d="M3 3l4 4-4 4M8.5 3l4 4-4 4" fill="none" stroke="#444" stroke-width="1.5"/></svg><!--/STA-->
</body></html>
